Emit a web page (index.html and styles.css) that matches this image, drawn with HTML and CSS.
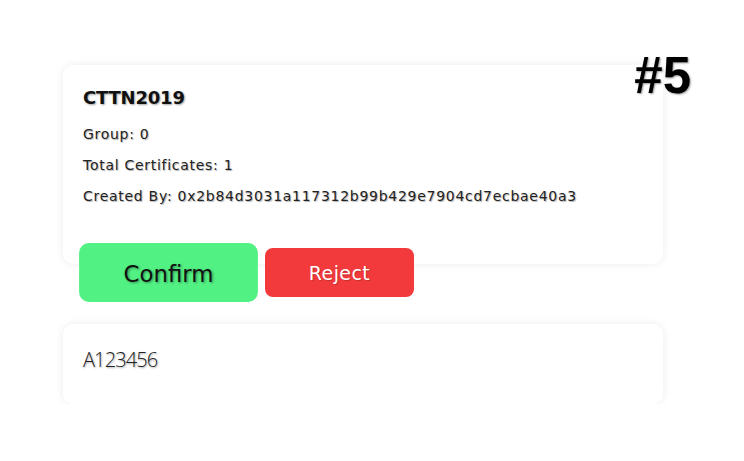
FILE: index.html
```html
<!DOCTYPE html>
<html>
<head>
<meta charset="utf-8">
<link rel="stylesheet" href="styles.css">
</head>
<body>
<div class="page">
  <div class="rank">#5</div>
  <div class="card info">
    <h2 class="title">CTTN2019</h2>
    <p class="line">Group: 0</p>
    <p class="line">Total Certificates: 1</p>
    <p class="line">Created By: 0x2b84d3031a117312b99b429e7904cd7ecbae40a3</p>
  </div>
  <div class="actions">
    <button class="btn confirm">Confirm</button>
    <button class="btn reject">Reject</button>
  </div>
  <div class="card code">
    <p class="code-text">A123456</p>
  </div>
</div>
</body>
</html>
```

FILE: styles.css
```css
html, body {
  margin: 0;
  padding: 0;
  background: #ffffff;
}
body {
  font-family: "DejaVu Sans", sans-serif;
  color: #111;
}
.page {
  position: relative;
  width: 600px;
  margin-left: 63px;
  padding-top: 65px;
}
.rank {
  position: absolute;
  top: 50px;
  right: -28px;
  font-family: "Liberation Sans", Arial, sans-serif;
  font-weight: 700;
  font-size: 51px;
  color: #000;
  text-shadow: 1px 1px 2px rgba(0,0,0,0.4);
  line-height: 1;
}
.card {
  background: #fff;
  border-radius: 10px;
  box-shadow: 0 0 8px rgba(0,0,0,0.08);
  box-sizing: border-box;
}
.info {
  height: 199px;
  padding: 22px 20px;
}
.title {
  margin: 0 0 17px;
  font-size: 18px;
  letter-spacing: -0.2px;
  font-weight: 700;
  text-shadow: 1px 1px 2px rgba(0,0,0,0.35);
}
.line {
  margin: 0 0 12px;
  font-size: 14px;
  letter-spacing: 0.72px;
  line-height: 19px;
  color: #222;
  text-shadow: 1px 1px 1px rgba(0,0,0,0.3);
}
.actions {
  display: flex;
  margin-top: -16px;
  padding-left: 20px;
}
.btn {
  width: 149px;
  height: 49px;
  margin: 0 11px;
  border: none;
  border-radius: 8px;
  font-family: inherit;
  font-size: 19px;
}
.confirm {
  background: #52f184;
  color: #111;
  transform: scale(1.2);
  text-shadow: 1px 1px 2px rgba(0,0,0,0.4);
}
.reject {
  background: #f23a3c;
  color: #fff;
  letter-spacing: 0.4px;
  text-shadow: 1px 1px 1px rgba(0,0,0,0.2);
}
.code {
  margin-top: 27px;
  height: 80px;
  padding: 22px 20px;
}
.code-text {
  margin: 0;
  font-family: "Open Sans", sans-serif;
  font-weight: 300;
  font-size: 20px;
  letter-spacing: -0.9px;
  color: #222;
  text-shadow: 1px 1px 2px rgba(0,0,0,0.35);
}
```
